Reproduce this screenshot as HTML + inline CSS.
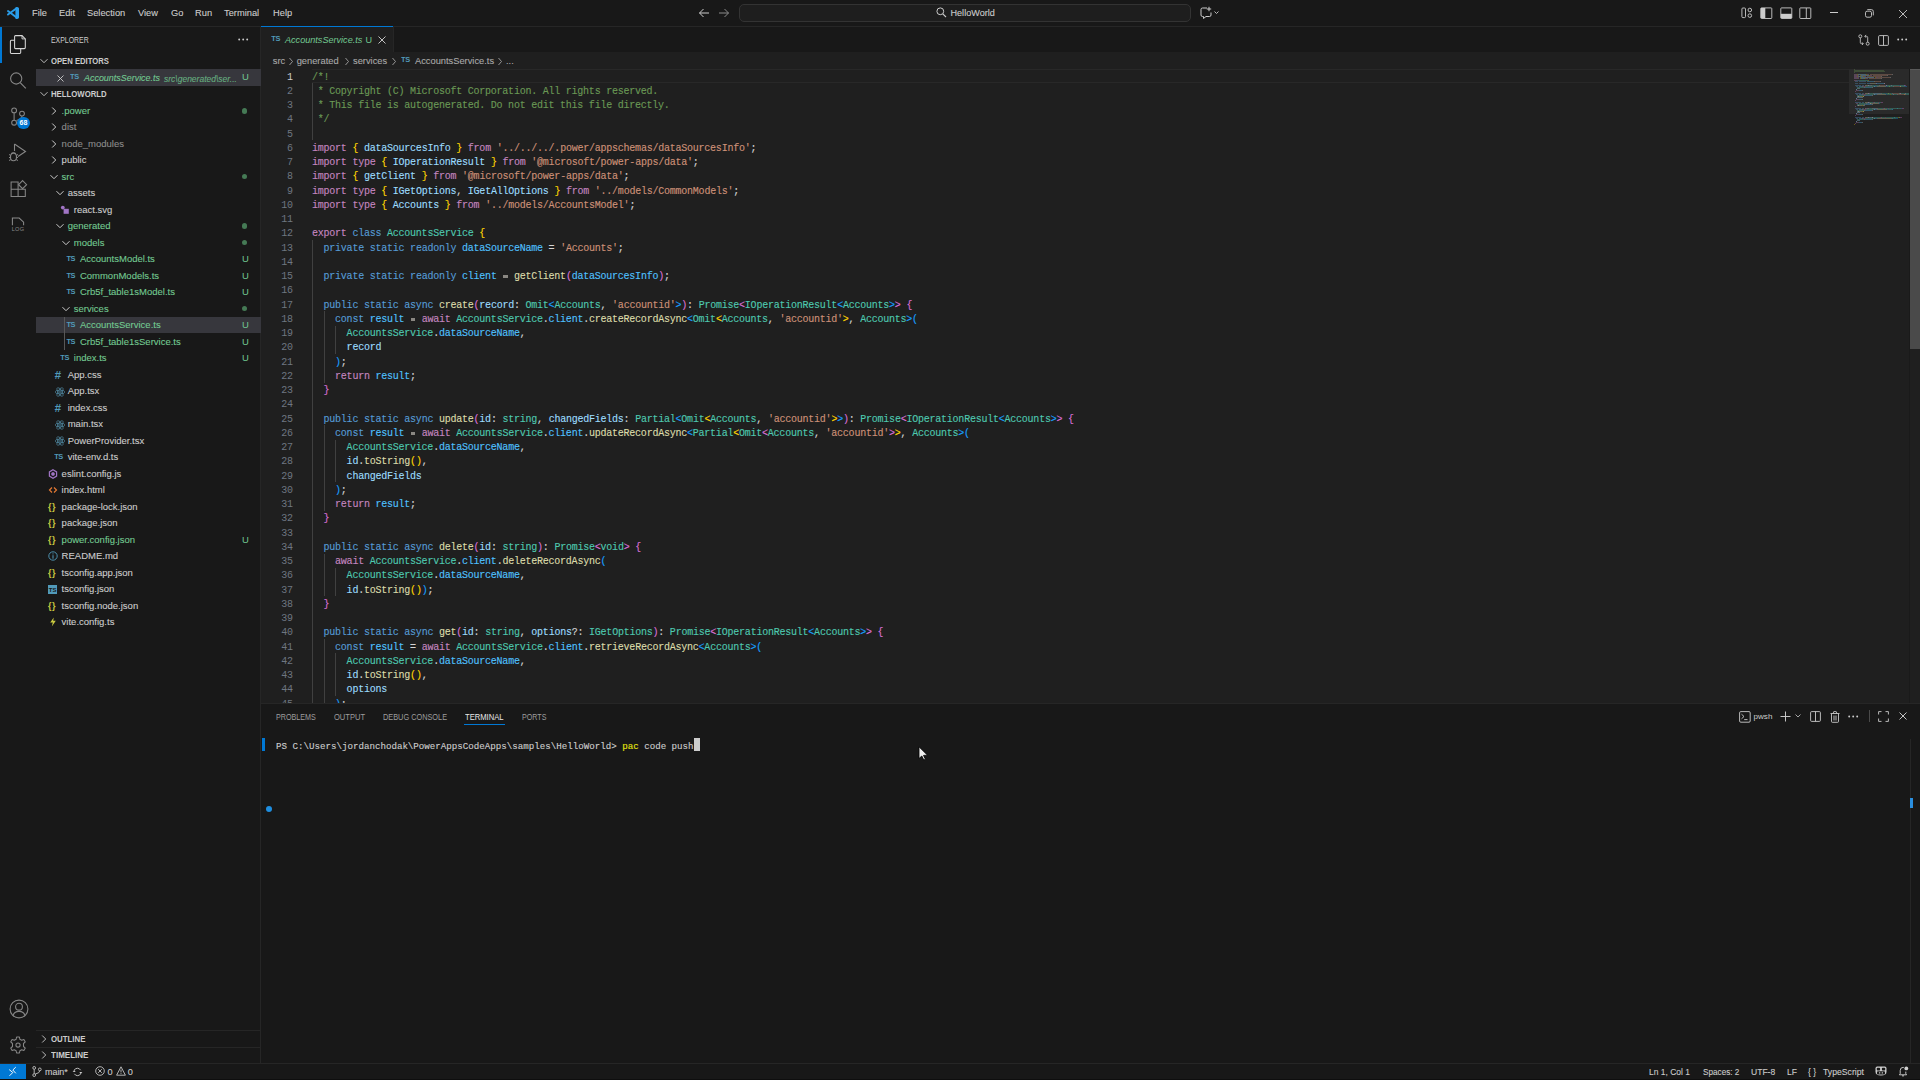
<!DOCTYPE html>
<html><head><meta charset="utf-8"><title>VS Code</title>
<style>
*{margin:0;padding:0;box-sizing:border-box}
html,body{width:1920px;height:1080px;overflow:hidden;background:#181818}
body{position:relative;font-family:"Liberation Sans",sans-serif;color:#cccccc}
.a{position:absolute}
.ic{position:absolute;overflow:visible}
/* title bar */
#title{position:absolute;left:0;top:0;width:1920px;height:26px;background:#181818}
.menu{-webkit-text-stroke:0.1px currentColor;position:absolute;top:7px;font-size:9.3px;line-height:12px;color:#cccccc;white-space:nowrap}
.hline{position:absolute;height:1px;background:#262626}
.vline{position:absolute;width:1px;background:#262626}
#cc{position:absolute;left:739px;top:4px;width:452px;height:17.6px;border:1px solid #333333;border-radius:5px;background:#1e1e1e}
/* activity bar */
#act{position:absolute;left:0;top:27px;width:36px;height:1036px;background:#181818}
/* sidebar */
#side{position:absolute;left:36px;top:27px;width:225px;height:1036px;background:#181818}
.tr{-webkit-text-stroke:0.1px currentColor;position:absolute;height:16.5px;line-height:16.5px;font-size:9.5px;white-space:nowrap}
.udeco{position:absolute;left:242px;height:16.5px;line-height:16.5px;font-size:9.5px;color:#73c991}
.gdot{position:absolute;left:241.8px;width:5.6px;height:5.6px;border-radius:50%;background:#457a55}
.selrow{position:absolute;left:36px;width:224.5px;height:16.5px;background:#37373d}
.tig{position:absolute;width:1px;background:#585858}
.tsic{position:absolute;font-size:7.4px;line-height:10px;font-weight:bold;color:#519aba;letter-spacing:-0.35px;transform:scaleY(0.95)}
.tsbox{position:absolute;width:9px;height:9px;background:#519aba;color:#181818;font-size:6px;line-height:10px;font-weight:bold;text-align:center;overflow:hidden}
.cssic{position:absolute;font-size:11.5px;line-height:12px;font-weight:bold;color:#519aba;font-style:italic}
.jsonic{position:absolute;font-size:9px;line-height:12px;font-weight:bold;color:#cbcb41;letter-spacing:0.5px}
.phdr{position:absolute;left:51px;font-size:8.3px;font-weight:bold;color:#cccccc;white-space:nowrap;line-height:16.5px;transform-origin:0 0}
/* editor */
#tabs{position:absolute;left:261px;top:27px;width:1659px;height:25px;background:#181818}
#editor{position:absolute;left:261px;top:52px;width:1659px;height:651px;background:#1f1f1f;overflow:hidden}
.cl{-webkit-text-stroke:0.12px currentColor;position:absolute;left:312px;height:14.25px;line-height:14.25px;font-family:"Liberation Mono",monospace;font-size:10px;letter-spacing:-0.233px;padding-top:1.7px;white-space:pre;color:#d4d4d4}
.ln{position:absolute;left:270px;width:22.7px;text-align:right;height:14.25px;line-height:14.25px;font-family:"Liberation Mono",monospace;font-size:10px;letter-spacing:-0.233px;padding-top:1.7px;color:#6e7681}
.ln.act{color:#cccccc}
.ig{position:absolute;width:1px;background:#404040}
#mm i{position:absolute;height:1px;opacity:0.32;display:block}
.bc{-webkit-text-stroke:0.1px currentColor;position:absolute;top:52.5px;height:16.5px;line-height:16.5px;font-size:9.3px;color:#a9a9a9;white-space:nowrap}
/* panel */
#panel{position:absolute;left:261px;top:703px;width:1659px;height:360px;background:#181818}
.ptab{position:absolute;top:709.5px;font-size:8.3px;line-height:14px;color:#9d9d9d;white-space:nowrap;transform-origin:0 0}
.term{-webkit-text-stroke:0.12px currentColor;position:absolute;font-family:"Liberation Mono",monospace;font-size:9.16px;line-height:13px;white-space:pre;color:#cccccc}
/* status */
#status{position:absolute;left:0;top:1063px;width:1920px;height:17px;background:#181818}
.st{-webkit-text-stroke:0.1px currentColor;position:absolute;top:1064.2px;height:16px;line-height:16px;font-size:9.2px;color:#cccccc;white-space:nowrap;transform-origin:0 0}
</style></head>
<body>
<!-- TITLE BAR -->
<div id="title"></div>
<svg class="ic" style="left:0;top:0" width="30" height="26" viewBox="0 0 30 26"><path d="M16.6 8.2 L8 14.6 M16.6 17.6 L8 11" fill="none" stroke="#2a9de9" stroke-width="1.9" stroke-linecap="round"/><path d="M15.4 7.6 Q16.2 6.8 17.2 7 L18.4 7.6 Q19 7.9 19 8.6 V17.4 Q19 18.1 18.4 18.4 L17.2 19 Q16.2 19.2 15.4 18.4 Z" fill="#2a9de9"/></svg>
<div class="menu" style="left:32px">File</div>
<div class="menu" style="left:59px">Edit</div>
<div class="menu" style="left:87px">Selection</div>
<div class="menu" style="left:138px">View</div>
<div class="menu" style="left:171px">Go</div>
<div class="menu" style="left:195px">Run</div>
<div class="menu" style="left:224px">Terminal</div>
<div class="menu" style="left:273px">Help</div>
<!-- nav arrows -->
<svg class="ic" style="left:698px;top:8px" width="12" height="10" viewBox="0 0 12 10"><path d="M11 5 H1.5 M5.5 1 L1.5 5 L5.5 9" fill="none" stroke="#cccccc" stroke-width="1"/></svg>
<svg class="ic" style="left:718px;top:8px" width="12" height="10" viewBox="0 0 12 10"><path d="M1 5 H10.5 M6.5 1 L10.5 5 L6.5 9" fill="none" stroke="#8a8a8a" stroke-width="1"/></svg>
<div id="cc"></div>
<svg class="ic" style="left:936px;top:7px" width="11" height="11" viewBox="0 0 11 11"><circle cx="4.3" cy="4.3" r="3.4" fill="none" stroke="#cccccc" stroke-width="1"/><path d="M6.8 6.8 L10 10" stroke="#cccccc" stroke-width="1.1"/></svg>
<div class="menu" style="left:950.5px;top:6.5px;font-size:9.1px">HelloWorld</div>
<!-- copilot chat icon -->
<svg class="ic" style="left:1200px;top:6px" width="22" height="14" viewBox="0 0 22 14"><path d="M1 3.5 Q1 2 2.5 2 H7 M1 3.5 V9 Q1 10.5 2.5 10.5 H3.5 V12.5 L6 10.5 H9.5 Q11 10.5 11 9 V6.5" fill="none" stroke="#cccccc" stroke-width="1"/><path d="M9 0.8 V5.2 M6.8 3 H11.2" stroke="#cccccc" stroke-width="1"/><path d="M14.5 5.5 L16.5 7.5 L18.5 5.5" fill="none" stroke="#cccccc" stroke-width="0.9"/></svg>
<!-- layout icons -->
<svg class="ic" style="left:1741px;top:7px" width="12" height="12" viewBox="0 0 12 12"><rect x="0.9" y="1" width="3.6" height="9.6" rx="1" fill="none" stroke="#cccccc" stroke-width="0.9"/><circle cx="8.8" cy="3" r="1.8" fill="none" stroke="#cccccc" stroke-width="0.9"/><circle cx="8.8" cy="8.6" r="1.8" fill="none" stroke="#cccccc" stroke-width="0.9"/></svg>
<svg class="ic" style="left:1760px;top:7px" width="13" height="12" viewBox="0 0 13 12"><rect x="0.8" y="0.9" width="11" height="10.6" rx="0.7" fill="none" stroke="#cccccc" stroke-width="0.9"/><rect x="0.8" y="1" width="4.5" height="10" fill="#cccccc"/></svg>
<svg class="ic" style="left:1779.5px;top:7px" width="13" height="12" viewBox="0 0 13 12"><rect x="0.8" y="0.9" width="11" height="10.6" rx="0.7" fill="none" stroke="#cccccc" stroke-width="0.9"/><rect x="0.8" y="6.8" width="11" height="4.2" fill="#cccccc"/></svg>
<svg class="ic" style="left:1799px;top:7px" width="13" height="12" viewBox="0 0 13 12"><rect x="0.8" y="0.9" width="11" height="10.6" rx="0.7" fill="none" stroke="#cccccc" stroke-width="0.9"/><path d="M7.3 1 V11" stroke="#cccccc" stroke-width="0.9"/></svg>
<div class="a" style="left:1830px;top:12px;width:8px;height:1px;background:#cccccc"></div>
<svg class="ic" style="left:1864.5px;top:8.8px" width="9" height="9" viewBox="0 0 9 9"><rect x="0.5" y="2.2" width="6" height="6" rx="1.6" fill="none" stroke="#cccccc" stroke-width="0.9"/><path d="M2.3 0.6 H6.4 Q8.3 0.6 8.3 2.5 V6.4" fill="none" stroke="#cccccc" stroke-width="0.9"/></svg>
<svg class="ic" style="left:1898px;top:8.5px" width="10" height="10" viewBox="0 0 10 10"><path d="M1 1 L9 9 M9 1 L1 9" stroke="#cccccc" stroke-width="0.9"/></svg>
<div class="hline" style="left:0;top:26px;width:1920px"></div>

<!-- ACTIVITY BAR -->
<div id="act"></div>
<div class="vline" style="left:35.5px;top:27px;height:1036px"></div>
<div class="a" style="left:0;top:27px;width:2px;height:35.5px;background:#0078d4"></div>
<!-- explorer icon -->
<svg class="ic" style="left:0;top:26px" width="36" height="36" viewBox="0 0 36 36"><path d="M15.5 9.6 H22 L25.3 12.9 V21.6 Q25.3 22.6 24.3 22.6 H15.5 Q14.6 22.6 14.6 21.6 V10.6 Q14.6 9.6 15.5 9.6 Z" fill="none" stroke="#d7d7d7" stroke-width="1.05"/><path d="M22 9.6 V12.9 H25.3" fill="none" stroke="#d7d7d7" stroke-width="0.9"/><path d="M14.6 14.2 H11.3 Q10.4 14.2 10.4 15.2 V26.5 Q10.4 27.4 11.3 27.4 H19.8 Q20.7 27.4 20.7 26.5 V22.6" fill="none" stroke="#d7d7d7" stroke-width="1.05"/></svg>
<!-- search -->
<svg class="ic" style="left:9px;top:71px" width="18" height="19" viewBox="0 0 18 19"><circle cx="7.2" cy="7.5" r="5.6" fill="none" stroke="#868686" stroke-width="1.1"/><path d="M11.2 11.6 L16.8 17.4" stroke="#868686" stroke-width="1.2"/></svg>
<!-- source control -->
<svg class="ic" style="left:10px;top:106px" width="16" height="20" viewBox="0 0 16 20"><circle cx="4.1" cy="4.4" r="2.4" fill="none" stroke="#868686" stroke-width="1.05"/><circle cx="4.1" cy="16.7" r="2.4" fill="none" stroke="#868686" stroke-width="1.05"/><circle cx="12" cy="7.6" r="2.4" fill="none" stroke="#868686" stroke-width="1.05"/><path d="M4.1 6.8 V14.3 M12 10 Q12 12.8 6.5 14.6" fill="none" stroke="#868686" stroke-width="1.05"/></svg>
<div class="a" style="left:17.1px;top:116.6px;width:12.8px;height:12.8px;border-radius:50%;background:#0078d4;color:#fff;font-size:7px;font-weight:bold;line-height:12.8px;text-align:center">68</div>
<!-- run debug -->
<svg class="ic" style="left:8px;top:142px" width="20" height="21" viewBox="0 0 20 21"><path d="M6.5 2 L17.5 9.5 L10 14.5" fill="none" stroke="#868686" stroke-width="1.1"/><path d="M6.5 2 V9" fill="none" stroke="#868686" stroke-width="1.1"/><ellipse cx="5.5" cy="15" rx="3" ry="3.8" fill="none" stroke="#868686" stroke-width="1.1"/><path d="M1 12.5 L2.8 13.4 M1 15.5 H2.5 M1 18.5 L2.8 17.6 M10 12.5 L8.2 13.4 M10 15.5 H8.5 M10 18.5 L8.2 17.6 M3 11.5 Q5.5 9.5 8 11.5" fill="none" stroke="#868686" stroke-width="1"/></svg>
<!-- extensions -->
<svg class="ic" style="left:10px;top:180px" width="18" height="18" viewBox="0 0 18 18"><path d="M1.1 2 H8.1 V16.4 H1.1 Z M1.1 9.2 H15.3 V16.4 H8.1" fill="none" stroke="#868686" stroke-width="1.05"/><path d="M12.6 0.6 L16.6 4.7 L12.6 8.7 L8.6 4.7 Z" fill="none" stroke="#868686" stroke-width="1.05"/></svg>
<!-- LOG -->
<svg class="ic" style="left:11px;top:216.5px" width="15" height="16" viewBox="0 0 15 16"><path d="M1.4 8.2 V1 H8.2 L12.6 5.2 V8.2" fill="none" stroke="#8a8a8a" stroke-width="1.05"/><text x="7" y="14.4" font-family="Liberation Sans" font-size="5.6" fill="#8a8a8a" text-anchor="middle" letter-spacing="0.2">LOG</text></svg>
<!-- account -->
<svg class="ic" style="left:8.5px;top:999px" width="20" height="20" viewBox="0 0 20 20"><circle cx="10" cy="10" r="8.9" fill="none" stroke="#868686" stroke-width="1.1"/><circle cx="10" cy="7.7" r="3.4" fill="none" stroke="#868686" stroke-width="1.1"/><path d="M4.2 16.6 Q5 12.4 10 12.4 Q15 12.4 15.8 16.6" fill="none" stroke="#868686" stroke-width="1.1"/></svg>
<!-- settings -->
<svg class="ic" style="left:9px;top:1036px" width="18" height="18" viewBox="0 0 18 18"><path d="M7.6 1 H10.4 L10.9 3.3 L12.7 4.3 L14.9 3.5 L16.3 5.9 L14.5 7.5 V10.5 L16.3 12.1 L14.9 14.5 L12.7 13.7 L10.9 14.7 L10.4 17 H7.6 L7.1 14.7 L5.3 13.7 L3.1 14.5 L1.7 12.1 L3.5 10.5 V7.5 L1.7 5.9 L3.1 3.5 L5.3 4.3 L7.1 3.3 Z" fill="none" stroke="#868686" stroke-width="1.05" stroke-linejoin="round"/><circle cx="9" cy="9" r="2.1" fill="none" stroke="#868686" stroke-width="1.05"/></svg>

<!-- SIDEBAR -->
<div id="side"></div>
<div class="vline" style="left:260.2px;top:27px;height:1036px"></div>
<div class="a" style="left:51px;top:33.3px;font-size:8.3px;line-height:14px;color:#cccccc;white-space:nowrap;transform-origin:0 0;transform:scaleX(0.834)">EXPLORER</div>
<svg class="ic" style="left:237.5px;top:38px" width="11" height="3" viewBox="0 0 11 3"><circle cx="1.2" cy="1.5" r="0.95" fill="#cccccc"/><circle cx="5.2" cy="1.5" r="0.95" fill="#cccccc"/><circle cx="9.2" cy="1.5" r="0.95" fill="#cccccc"/></svg>
<svg class="ic" style="left:38.5px;top:56px" width="10" height="10" viewBox="0 0 10 10"><path d="M1.5 3.2 L5 6.7 L8.5 3.2" fill="none" stroke="#cccccc" stroke-width="0.9"/></svg>
<div class="phdr" style="top:53px;transform:scaleX(0.927)">OPEN EDITORS</div>
<div class="a" style="left:36px;top:69px;width:224.5px;height:16.5px;background:#37373d"></div>
<svg class="ic" style="left:57px;top:74.5px" width="7" height="7" viewBox="0 0 7 7"><path d="M0.5 0.5 L6.5 6.5 M6.5 0.5 L0.5 6.5" stroke="#cccccc" stroke-width="0.9"/></svg>
<div class="tsic" style="left:70px;top:72.2px">TS</div>
<div class="tr" style="left:84px;top:69.8px;color:#73c991;font-style:italic;font-size:8.95px">AccountsService.ts</div>
<div class="tr" style="left:164px;top:70.5px;color:#73c991;font-style:italic;font-size:8.5px;opacity:0.8">src\generated\ser...</div>
<div class="udeco" style="top:69px">U</div>
<svg class="ic" style="left:38.5px;top:89px" width="10" height="10" viewBox="0 0 10 10"><path d="M1.5 3.2 L5 6.7 L8.5 3.2" fill="none" stroke="#cccccc" stroke-width="0.9"/></svg>
<div class="phdr" style="top:86px;transform:scaleX(0.937)">HELLOWORLD</div>
<svg class="ic" style="left:49.3px;top:105.8px" width="10" height="10" viewBox="0 0 10 10"><path d="M3.2 1.5 L6.7 5 L3.2 8.5" fill="none" stroke="#cccccc" stroke-width="1.0"/></svg>
<div class="tr" style="left:61.6px;top:102.5px;color:#73c991">.power</div>
<div class="gdot" style="top:108.0px"></div>
<svg class="ic" style="left:49.3px;top:122.2px" width="10" height="10" viewBox="0 0 10 10"><path d="M3.2 1.5 L6.7 5 L3.2 8.5" fill="none" stroke="#cccccc" stroke-width="1.0"/></svg>
<div class="tr" style="left:61.6px;top:119.0px;color:#8c8c8c">dist</div>
<svg class="ic" style="left:49.3px;top:138.8px" width="10" height="10" viewBox="0 0 10 10"><path d="M3.2 1.5 L6.7 5 L3.2 8.5" fill="none" stroke="#cccccc" stroke-width="1.0"/></svg>
<div class="tr" style="left:61.6px;top:135.5px;color:#8c8c8c">node_modules</div>
<svg class="ic" style="left:49.3px;top:155.2px" width="10" height="10" viewBox="0 0 10 10"><path d="M3.2 1.5 L6.7 5 L3.2 8.5" fill="none" stroke="#cccccc" stroke-width="1.0"/></svg>
<div class="tr" style="left:61.6px;top:152.0px;color:#cccccc">public</div>
<svg class="ic" style="left:48.6px;top:171.6px" width="10" height="10" viewBox="0 0 10 10"><path d="M1.5 3.2 L5 6.7 L8.5 3.2" fill="none" stroke="#cccccc" stroke-width="1.0"/></svg>
<div class="tr" style="left:61.6px;top:168.5px;color:#73c991">src</div>
<div class="gdot" style="top:173.9px"></div>
<svg class="ic" style="left:54.7px;top:188.1px" width="10" height="10" viewBox="0 0 10 10"><path d="M1.5 3.2 L5 6.7 L8.5 3.2" fill="none" stroke="#cccccc" stroke-width="1.0"/></svg>
<div class="tr" style="left:67.7px;top:185.0px;color:#cccccc">assets</div>
<svg class="ic" style="left:60.3px;top:204.8px" width="10" height="10" viewBox="0 0 10 10"><circle cx="2.8" cy="2.6" r="1.9" fill="#a074c4"/><rect x="3.6" y="3.8" width="5.2" height="5" fill="#a074c4"/></svg>
<div class="tr" style="left:73.8px;top:201.5px;color:#cccccc">react.svg</div>
<svg class="ic" style="left:54.7px;top:221.1px" width="10" height="10" viewBox="0 0 10 10"><path d="M1.5 3.2 L5 6.7 L8.5 3.2" fill="none" stroke="#cccccc" stroke-width="1.0"/></svg>
<div class="tr" style="left:67.7px;top:218.0px;color:#73c991">generated</div>
<div class="gdot" style="top:223.4px"></div>
<svg class="ic" style="left:60.8px;top:237.6px" width="10" height="10" viewBox="0 0 10 10"><path d="M1.5 3.2 L5 6.7 L8.5 3.2" fill="none" stroke="#cccccc" stroke-width="1.0"/></svg>
<div class="tr" style="left:73.8px;top:234.5px;color:#73c991">models</div>
<div class="gdot" style="top:239.9px"></div>
<div class="tsic" style="left:66.4px;top:254.2px">TS</div>
<div class="tr" style="left:79.9px;top:251.0px;color:#73c991">AccountsModel.ts</div>
<div class="udeco" style="top:251.0px">U</div>
<div class="tsic" style="left:66.4px;top:270.8px">TS</div>
<div class="tr" style="left:79.9px;top:267.5px;color:#73c991">CommonModels.ts</div>
<div class="udeco" style="top:267.5px">U</div>
<div class="tsic" style="left:66.4px;top:287.2px">TS</div>
<div class="tr" style="left:79.9px;top:284.0px;color:#73c991">Crb5f_table1sModel.ts</div>
<div class="udeco" style="top:284.0px">U</div>
<svg class="ic" style="left:60.8px;top:303.6px" width="10" height="10" viewBox="0 0 10 10"><path d="M1.5 3.2 L5 6.7 L8.5 3.2" fill="none" stroke="#cccccc" stroke-width="1.0"/></svg>
<div class="tr" style="left:73.8px;top:300.5px;color:#73c991">services</div>
<div class="gdot" style="top:305.9px"></div>
<div class="selrow" style="top:316.5px"></div>
<div class="tsic" style="left:66.4px;top:320.2px">TS</div>
<div class="tr" style="left:79.9px;top:317.0px;color:#73c991">AccountsService.ts</div>
<div class="udeco" style="top:317.0px">U</div>
<div class="tsic" style="left:66.4px;top:336.8px">TS</div>
<div class="tr" style="left:79.9px;top:333.5px;color:#73c991">Crb5f_table1sService.ts</div>
<div class="udeco" style="top:333.5px">U</div>
<div class="tsic" style="left:60.3px;top:353.2px">TS</div>
<div class="tr" style="left:73.8px;top:350.0px;color:#73c991">index.ts</div>
<div class="udeco" style="top:350.0px">U</div>
<div class="cssic" style="left:54.5px;top:368.6px">#</div>
<div class="tr" style="left:67.7px;top:366.5px;color:#cccccc">App.css</div>
<svg class="ic" style="left:53.7px;top:385.8px" width="12" height="12" viewBox="0 0 12 12"><g fill="none" stroke="#5fa8c8" stroke-width="0.5"><ellipse cx="6" cy="6" rx="4.9" ry="1.9"/><ellipse cx="6" cy="6" rx="4.9" ry="1.9" transform="rotate(60 6 6)"/><ellipse cx="6" cy="6" rx="4.9" ry="1.9" transform="rotate(120 6 6)"/></g><circle cx="6" cy="6" r="0.8" fill="#519aba"/></svg>
<div class="tr" style="left:67.7px;top:383.0px;color:#cccccc">App.tsx</div>
<div class="cssic" style="left:54.5px;top:401.6px">#</div>
<div class="tr" style="left:67.7px;top:399.5px;color:#cccccc">index.css</div>
<svg class="ic" style="left:53.7px;top:418.8px" width="12" height="12" viewBox="0 0 12 12"><g fill="none" stroke="#5fa8c8" stroke-width="0.5"><ellipse cx="6" cy="6" rx="4.9" ry="1.9"/><ellipse cx="6" cy="6" rx="4.9" ry="1.9" transform="rotate(60 6 6)"/><ellipse cx="6" cy="6" rx="4.9" ry="1.9" transform="rotate(120 6 6)"/></g><circle cx="6" cy="6" r="0.8" fill="#519aba"/></svg>
<div class="tr" style="left:67.7px;top:416.0px;color:#cccccc">main.tsx</div>
<svg class="ic" style="left:53.7px;top:435.2px" width="12" height="12" viewBox="0 0 12 12"><g fill="none" stroke="#5fa8c8" stroke-width="0.5"><ellipse cx="6" cy="6" rx="4.9" ry="1.9"/><ellipse cx="6" cy="6" rx="4.9" ry="1.9" transform="rotate(60 6 6)"/><ellipse cx="6" cy="6" rx="4.9" ry="1.9" transform="rotate(120 6 6)"/></g><circle cx="6" cy="6" r="0.8" fill="#519aba"/></svg>
<div class="tr" style="left:67.7px;top:432.5px;color:#cccccc">PowerProvider.tsx</div>
<div class="tsic" style="left:54.2px;top:452.2px">TS</div>
<div class="tr" style="left:67.7px;top:449.0px;color:#cccccc">vite-env.d.ts</div>
<svg class="ic" style="left:48.1px;top:468.8px" width="10" height="10" viewBox="0 0 10 10"><path d="M5 0.8 L8.6 2.9 L8.6 7.1 L5 9.2 L1.4 7.1 L1.4 2.9 Z" fill="none" stroke="#a074c4" stroke-width="1.2"/><path d="M5 3 L6.7 4 L6.7 6 L5 7 L3.3 6 L3.3 4 Z" fill="#a074c4"/></svg>
<div class="tr" style="left:61.6px;top:465.5px;color:#cccccc">eslint.config.js</div>
<svg class="ic" style="left:48.1px;top:485.2px" width="10" height="10" viewBox="0 0 10 10"><path d="M4 2.5 L1.5 5 L4 7.5 M6 2.5 L8.5 5 L6 7.5" fill="none" stroke="#e37933" stroke-width="1.2"/></svg>
<div class="tr" style="left:61.6px;top:482.0px;color:#cccccc">index.html</div>
<div class="jsonic" style="left:48.1px;top:500.8px">{}</div>
<div class="tr" style="left:61.6px;top:498.5px;color:#cccccc">package-lock.json</div>
<div class="jsonic" style="left:48.1px;top:517.2px">{}</div>
<div class="tr" style="left:61.6px;top:515.0px;color:#cccccc">package.json</div>
<div class="jsonic" style="left:48.1px;top:533.8px">{}</div>
<div class="tr" style="left:61.6px;top:531.5px;color:#73c991">power.config.json</div>
<div class="udeco" style="top:531.5px">U</div>
<svg class="ic" style="left:48.1px;top:551.2px" width="10" height="10" viewBox="0 0 10 10"><circle cx="5" cy="5" r="4.2" fill="none" stroke="#519aba" stroke-width="0.9"/><rect x="4.5" y="4.2" width="1" height="3.5" fill="#519aba"/><rect x="4.5" y="2.4" width="1" height="1" fill="#519aba"/></svg>
<div class="tr" style="left:61.6px;top:548.0px;color:#cccccc">README.md</div>
<div class="jsonic" style="left:48.1px;top:566.8px">{}</div>
<div class="tr" style="left:61.6px;top:564.5px;color:#cccccc">tsconfig.app.json</div>
<div class="tsbox" style="left:48.1px;top:584.8px">TS</div>
<div class="tr" style="left:61.6px;top:581.0px;color:#cccccc">tsconfig.json</div>
<div class="jsonic" style="left:48.1px;top:599.8px">{}</div>
<div class="tr" style="left:61.6px;top:597.5px;color:#cccccc">tsconfig.node.json</div>
<svg class="ic" style="left:48.1px;top:617.2px" width="10" height="10" viewBox="0 0 10 10"><path d="M5.8 0.5 L2.2 5.6 L4.8 5.6 L3.8 9.5 L7.8 3.8 L5.2 3.8 Z" fill="#cbcb41"/></svg>
<div class="tr" style="left:61.6px;top:614.0px;color:#cccccc">vite.config.ts</div>
<div class="tig" style="left:63.6px;top:316.5px;height:33px"></div>
<div class="hline" style="left:36px;top:1030px;width:224.5px"></div>
<svg class="ic" style="left:38.5px;top:1033.5px" width="10" height="10" viewBox="0 0 10 10"><path d="M3.2 1.5 L6.7 5 L3.2 8.5" fill="none" stroke="#cccccc" stroke-width="0.9"/></svg>
<div class="phdr" style="top:1030.5px;transform:scaleX(0.945)">OUTLINE</div>
<div class="hline" style="left:36px;top:1046.5px;width:224.5px"></div>
<svg class="ic" style="left:38.5px;top:1050px" width="10" height="10" viewBox="0 0 10 10"><path d="M3.2 1.5 L6.7 5 L3.2 8.5" fill="none" stroke="#cccccc" stroke-width="0.9"/></svg>
<div class="phdr" style="top:1047px;transform:scaleX(0.968)">TIMELINE</div>

<!-- TABS -->
<div id="tabs"></div>
<div class="a" style="left:261px;top:26.5px;width:131.5px;height:26px;background:#1f1f1f"></div>
<div class="a" style="left:261px;top:26.3px;width:131.5px;height:1px;background:#0078d4"></div>
<div class="vline" style="left:392.5px;top:27px;height:25px"></div>
<div class="hline" style="left:393px;top:51.5px;width:1527px"></div>
<div class="tsic" style="left:271.3px;top:34.4px">TS</div>
<div class="a" style="left:285px;top:32.8px;font-size:9.1px;line-height:14px;color:#73c991;font-style:italic;white-space:nowrap">AccountsService.ts</div>
<div class="a" style="left:365.5px;top:32.8px;font-size:9.1px;line-height:14px;color:#73c991;white-space:nowrap">U</div>
<svg class="ic" style="left:378px;top:35.5px" width="8" height="8" viewBox="0 0 8 8"><path d="M0.5 0.5 L7.5 7.5 M7.5 0.5 L0.5 7.5" stroke="#cccccc" stroke-width="0.95"/></svg>
<!-- editor actions -->
<svg class="ic" style="left:1857.5px;top:34px" width="12" height="12" viewBox="0 0 12 12"><circle cx="2.3" cy="2.3" r="1.5" fill="none" stroke="#cccccc" stroke-width="0.85"/><circle cx="9.7" cy="9.7" r="1.5" fill="none" stroke="#cccccc" stroke-width="0.85"/><path d="M2.3 3.8 V8.5 Q2.3 9.7 3.5 9.7 H5 M4 8.3 L5.3 9.7 L4 11 M9.7 8.2 V3.5 Q9.7 2.3 8.5 2.3 H7 M8 0.9 L6.7 2.3 L8 3.7" fill="none" stroke="#cccccc" stroke-width="0.85"/></svg>
<svg class="ic" style="left:1878px;top:34.5px" width="11" height="11" viewBox="0 0 11 11"><rect x="0.6" y="0.6" width="9.8" height="9.8" rx="1" fill="none" stroke="#cccccc" stroke-width="0.9"/><path d="M5.5 0.6 V10.4" stroke="#cccccc" stroke-width="0.9"/></svg>
<svg class="ic" style="left:1897px;top:38px" width="11" height="3" viewBox="0 0 11 3"><circle cx="1.2" cy="1.5" r="0.95" fill="#cccccc"/><circle cx="5.2" cy="1.5" r="0.95" fill="#cccccc"/><circle cx="9.2" cy="1.5" r="0.95" fill="#cccccc"/></svg>

<!-- EDITOR -->
<div id="editor"></div>
<div class="bc" style="left:272.8px">src</div>
<svg class="ic" style="left:287.5px;top:56.5px" width="6" height="9" viewBox="0 0 6 9"><path d="M1.5 1 L4.5 4.5 L1.5 8" fill="none" stroke="#a9a9a9" stroke-width="0.85"/></svg>
<div class="bc" style="left:296.7px">generated</div>
<svg class="ic" style="left:344px;top:56.5px" width="6" height="9" viewBox="0 0 6 9"><path d="M1.5 1 L4.5 4.5 L1.5 8" fill="none" stroke="#a9a9a9" stroke-width="0.85"/></svg>
<div class="bc" style="left:353px">services</div>
<svg class="ic" style="left:391px;top:56.5px" width="6" height="9" viewBox="0 0 6 9"><path d="M1.5 1 L4.5 4.5 L1.5 8" fill="none" stroke="#a9a9a9" stroke-width="0.85"/></svg>
<div class="tsic" style="left:401px;top:55.3px">TS</div>
<div class="bc" style="left:415px">AccountsService.ts</div>
<svg class="ic" style="left:497px;top:56.5px" width="6" height="9" viewBox="0 0 6 9"><path d="M1.5 1 L4.5 4.5 L1.5 8" fill="none" stroke="#a9a9a9" stroke-width="0.85"/></svg>
<div class="bc" style="left:506px">...</div>
<!-- line highlight -->
<div class="a" style="left:312px;top:69.2px;width:1537px;height:13.4px;border-top:1px solid #282828;border-bottom:1px solid #282828"></div>
<div class="ig" style="left:312.0px;top:83.25px;height:57.00px"></div>
<div class="ig" style="left:312.0px;top:240.00px;height:463.00px"></div>
<div class="ig" style="left:323.5px;top:311.25px;height:71.25px"></div>
<div class="ig" style="left:323.5px;top:425.25px;height:85.50px"></div>
<div class="ig" style="left:323.5px;top:553.50px;height:42.75px"></div>
<div class="ig" style="left:323.5px;top:639.00px;height:64.00px"></div>
<div class="ig" style="left:335.1px;top:325.50px;height:28.50px"></div>
<div class="ig" style="left:335.1px;top:439.50px;height:42.75px"></div>
<div class="ig" style="left:335.1px;top:567.75px;height:28.50px"></div>
<div class="ig" style="left:335.1px;top:653.25px;height:42.75px"></div>
<div class="cl" style="top:69.00px"><span style="color:#6A9955">/*!</span></div>
<div class="ln act" style="top:69.00px">1</div>
<div class="cl" style="top:83.25px"><span style="color:#6A9955"> * Copyright (C) Microsoft Corporation. All rights reserved.</span></div>
<div class="ln" style="top:83.25px">2</div>
<div class="cl" style="top:97.50px"><span style="color:#6A9955"> * This file is autogenerated. Do not edit this file directly.</span></div>
<div class="ln" style="top:97.50px">3</div>
<div class="cl" style="top:111.75px"><span style="color:#6A9955"> */</span></div>
<div class="ln" style="top:111.75px">4</div>
<div class="cl" style="top:126.00px"></div>
<div class="ln" style="top:126.00px">5</div>
<div class="cl" style="top:140.25px"><span style="color:#C586C0">import</span> <span style="color:#FFD700">{</span> <span style="color:#9CDCFE">dataSourcesInfo</span> <span style="color:#FFD700">}</span> <span style="color:#C586C0">from</span> <span style="color:#CE9178">&#x27;../../../.power/appschemas/dataSourcesInfo&#x27;</span><span style="color:#D4D4D4">;</span></div>
<div class="ln" style="top:140.25px">6</div>
<div class="cl" style="top:154.50px"><span style="color:#C586C0">import</span> <span style="color:#C586C0">type</span> <span style="color:#FFD700">{</span> <span style="color:#9CDCFE">IOperationResult</span> <span style="color:#FFD700">}</span> <span style="color:#C586C0">from</span> <span style="color:#CE9178">&#x27;@microsoft/power-apps/data&#x27;</span><span style="color:#D4D4D4">;</span></div>
<div class="ln" style="top:154.50px">7</div>
<div class="cl" style="top:168.75px"><span style="color:#C586C0">import</span> <span style="color:#FFD700">{</span> <span style="color:#9CDCFE">getClient</span> <span style="color:#FFD700">}</span> <span style="color:#C586C0">from</span> <span style="color:#CE9178">&#x27;@microsoft/power-apps/data&#x27;</span><span style="color:#D4D4D4">;</span></div>
<div class="ln" style="top:168.75px">8</div>
<div class="cl" style="top:183.00px"><span style="color:#C586C0">import</span> <span style="color:#C586C0">type</span> <span style="color:#FFD700">{</span> <span style="color:#9CDCFE">IGetOptions</span><span style="color:#D4D4D4">,</span> <span style="color:#9CDCFE">IGetAllOptions</span> <span style="color:#FFD700">}</span> <span style="color:#C586C0">from</span> <span style="color:#CE9178">&#x27;../models/CommonModels&#x27;</span><span style="color:#D4D4D4">;</span></div>
<div class="ln" style="top:183.00px">9</div>
<div class="cl" style="top:197.25px"><span style="color:#C586C0">import</span> <span style="color:#C586C0">type</span> <span style="color:#FFD700">{</span> <span style="color:#9CDCFE">Accounts</span> <span style="color:#FFD700">}</span> <span style="color:#C586C0">from</span> <span style="color:#CE9178">&#x27;../models/AccountsModel&#x27;</span><span style="color:#D4D4D4">;</span></div>
<div class="ln" style="top:197.25px">10</div>
<div class="cl" style="top:211.50px"></div>
<div class="ln" style="top:211.50px">11</div>
<div class="cl" style="top:225.75px"><span style="color:#C586C0">export</span> <span style="color:#569CD6">class</span> <span style="color:#4EC9B0">AccountsService</span> <span style="color:#FFD700">{</span></div>
<div class="ln" style="top:225.75px">12</div>
<div class="cl" style="top:240.00px">  <span style="color:#569CD6">private</span> <span style="color:#569CD6">static</span> <span style="color:#569CD6">readonly</span> <span style="color:#4FC1FF">dataSourceName</span> <span style="color:#D4D4D4">=</span> <span style="color:#CE9178">&#x27;Accounts&#x27;</span><span style="color:#D4D4D4">;</span></div>
<div class="ln" style="top:240.00px">13</div>
<div class="cl" style="top:254.25px"></div>
<div class="ln" style="top:254.25px">14</div>
<div class="a" style="left:502.91px;top:274.90px;width:4.6px;height:3.4px;background:#8a8782"></div>
<div class="cl" style="top:268.50px">  <span style="color:#569CD6">private</span> <span style="color:#569CD6">static</span> <span style="color:#569CD6">readonly</span> <span style="color:#4FC1FF">client</span>   <span style="color:#DCDCAA">getClient</span><span style="color:#DA70D6">(</span><span style="color:#4FC1FF">dataSourcesInfo</span><span style="color:#DA70D6">)</span><span style="color:#D4D4D4">;</span></div>
<div class="ln" style="top:268.50px">15</div>
<div class="cl" style="top:282.75px"></div>
<div class="ln" style="top:282.75px">16</div>
<div class="cl" style="top:297.00px">  <span style="color:#569CD6">public</span> <span style="color:#569CD6">static</span> <span style="color:#569CD6">async</span> <span style="color:#DCDCAA">create</span><span style="color:#DA70D6">(</span><span style="color:#9CDCFE">record</span><span style="color:#D4D4D4">:</span> <span style="color:#4EC9B0">Omit</span><span style="color:#179FFF">&lt;</span><span style="color:#4EC9B0">Accounts</span><span style="color:#D4D4D4">,</span> <span style="color:#CE9178">&#x27;accountid&#x27;</span><span style="color:#179FFF">&gt;</span><span style="color:#DA70D6">)</span><span style="color:#D4D4D4">:</span> <span style="color:#4EC9B0">Promise</span><span style="color:#DA70D6">&lt;</span><span style="color:#4EC9B0">IOperationResult</span><span style="color:#179FFF">&lt;</span><span style="color:#4EC9B0">Accounts</span><span style="color:#179FFF">&gt;</span><span style="color:#DA70D6">&gt;</span> <span style="color:#DA70D6">{</span></div>
<div class="ln" style="top:297.00px">17</div>
<div class="a" style="left:410.64px;top:317.65px;width:4.6px;height:3.4px;background:#8a8782"></div>
<div class="cl" style="top:311.25px">    <span style="color:#569CD6">const</span> <span style="color:#4FC1FF">result</span>   <span style="color:#C586C0">await</span> <span style="color:#4EC9B0">AccountsService</span><span style="color:#D4D4D4">.</span><span style="color:#4FC1FF">client</span><span style="color:#D4D4D4">.</span><span style="color:#DCDCAA">createRecordAsync</span><span style="color:#179FFF">&lt;</span><span style="color:#4EC9B0">Omit</span><span style="color:#FFD700">&lt;</span><span style="color:#4EC9B0">Accounts</span><span style="color:#D4D4D4">,</span> <span style="color:#CE9178">&#x27;accountid&#x27;</span><span style="color:#FFD700">&gt;</span><span style="color:#D4D4D4">,</span> <span style="color:#4EC9B0">Accounts</span><span style="color:#179FFF">&gt;</span><span style="color:#179FFF">(</span></div>
<div class="ln" style="top:311.25px">18</div>
<div class="cl" style="top:325.50px">      <span style="color:#4EC9B0">AccountsService</span><span style="color:#D4D4D4">.</span><span style="color:#4FC1FF">dataSourceName</span><span style="color:#D4D4D4">,</span></div>
<div class="ln" style="top:325.50px">19</div>
<div class="cl" style="top:339.75px">      <span style="color:#9CDCFE">record</span></div>
<div class="ln" style="top:339.75px">20</div>
<div class="cl" style="top:354.00px">    <span style="color:#179FFF">)</span><span style="color:#D4D4D4">;</span></div>
<div class="ln" style="top:354.00px">21</div>
<div class="cl" style="top:368.25px">    <span style="color:#C586C0">return</span> <span style="color:#4FC1FF">result</span><span style="color:#D4D4D4">;</span></div>
<div class="ln" style="top:368.25px">22</div>
<div class="cl" style="top:382.50px">  <span style="color:#DA70D6">}</span></div>
<div class="ln" style="top:382.50px">23</div>
<div class="cl" style="top:396.75px"></div>
<div class="ln" style="top:396.75px">24</div>
<div class="cl" style="top:411.00px">  <span style="color:#569CD6">public</span> <span style="color:#569CD6">static</span> <span style="color:#569CD6">async</span> <span style="color:#DCDCAA">update</span><span style="color:#DA70D6">(</span><span style="color:#9CDCFE">id</span><span style="color:#D4D4D4">:</span> <span style="color:#4EC9B0">string</span><span style="color:#D4D4D4">,</span> <span style="color:#9CDCFE">changedFields</span><span style="color:#D4D4D4">:</span> <span style="color:#4EC9B0">Partial</span><span style="color:#179FFF">&lt;</span><span style="color:#4EC9B0">Omit</span><span style="color:#FFD700">&lt;</span><span style="color:#4EC9B0">Accounts</span><span style="color:#D4D4D4">,</span> <span style="color:#CE9178">&#x27;accountid&#x27;</span><span style="color:#FFD700">&gt;</span><span style="color:#179FFF">&gt;</span><span style="color:#DA70D6">)</span><span style="color:#D4D4D4">:</span> <span style="color:#4EC9B0">Promise</span><span style="color:#DA70D6">&lt;</span><span style="color:#4EC9B0">IOperationResult</span><span style="color:#179FFF">&lt;</span><span style="color:#4EC9B0">Accounts</span><span style="color:#179FFF">&gt;</span><span style="color:#DA70D6">&gt;</span> <span style="color:#DA70D6">{</span></div>
<div class="ln" style="top:411.00px">25</div>
<div class="a" style="left:410.64px;top:431.65px;width:4.6px;height:3.4px;background:#8a8782"></div>
<div class="cl" style="top:425.25px">    <span style="color:#569CD6">const</span> <span style="color:#4FC1FF">result</span>   <span style="color:#C586C0">await</span> <span style="color:#4EC9B0">AccountsService</span><span style="color:#D4D4D4">.</span><span style="color:#4FC1FF">client</span><span style="color:#D4D4D4">.</span><span style="color:#DCDCAA">updateRecordAsync</span><span style="color:#179FFF">&lt;</span><span style="color:#4EC9B0">Partial</span><span style="color:#FFD700">&lt;</span><span style="color:#4EC9B0">Omit</span><span style="color:#DA70D6">&lt;</span><span style="color:#4EC9B0">Accounts</span><span style="color:#D4D4D4">,</span> <span style="color:#CE9178">&#x27;accountid&#x27;</span><span style="color:#DA70D6">&gt;</span><span style="color:#FFD700">&gt;</span><span style="color:#D4D4D4">,</span> <span style="color:#4EC9B0">Accounts</span><span style="color:#179FFF">&gt;</span><span style="color:#179FFF">(</span></div>
<div class="ln" style="top:425.25px">26</div>
<div class="cl" style="top:439.50px">      <span style="color:#4EC9B0">AccountsService</span><span style="color:#D4D4D4">.</span><span style="color:#4FC1FF">dataSourceName</span><span style="color:#D4D4D4">,</span></div>
<div class="ln" style="top:439.50px">27</div>
<div class="cl" style="top:453.75px">      <span style="color:#9CDCFE">id</span><span style="color:#D4D4D4">.</span><span style="color:#DCDCAA">toString</span><span style="color:#FFD700">(</span><span style="color:#FFD700">)</span><span style="color:#D4D4D4">,</span></div>
<div class="ln" style="top:453.75px">28</div>
<div class="cl" style="top:468.00px">      <span style="color:#9CDCFE">changedFields</span></div>
<div class="ln" style="top:468.00px">29</div>
<div class="cl" style="top:482.25px">    <span style="color:#179FFF">)</span><span style="color:#D4D4D4">;</span></div>
<div class="ln" style="top:482.25px">30</div>
<div class="cl" style="top:496.50px">    <span style="color:#C586C0">return</span> <span style="color:#4FC1FF">result</span><span style="color:#D4D4D4">;</span></div>
<div class="ln" style="top:496.50px">31</div>
<div class="cl" style="top:510.75px">  <span style="color:#DA70D6">}</span></div>
<div class="ln" style="top:510.75px">32</div>
<div class="cl" style="top:525.00px"></div>
<div class="ln" style="top:525.00px">33</div>
<div class="cl" style="top:539.25px">  <span style="color:#569CD6">public</span> <span style="color:#569CD6">static</span> <span style="color:#569CD6">async</span> <span style="color:#DCDCAA">delete</span><span style="color:#DA70D6">(</span><span style="color:#9CDCFE">id</span><span style="color:#D4D4D4">:</span> <span style="color:#4EC9B0">string</span><span style="color:#DA70D6">)</span><span style="color:#D4D4D4">:</span> <span style="color:#4EC9B0">Promise</span><span style="color:#DA70D6">&lt;</span><span style="color:#4EC9B0">void</span><span style="color:#DA70D6">&gt;</span> <span style="color:#DA70D6">{</span></div>
<div class="ln" style="top:539.25px">34</div>
<div class="cl" style="top:553.50px">    <span style="color:#C586C0">await</span> <span style="color:#4EC9B0">AccountsService</span><span style="color:#D4D4D4">.</span><span style="color:#4FC1FF">client</span><span style="color:#D4D4D4">.</span><span style="color:#DCDCAA">deleteRecordAsync</span><span style="color:#179FFF">(</span></div>
<div class="ln" style="top:553.50px">35</div>
<div class="cl" style="top:567.75px">      <span style="color:#4EC9B0">AccountsService</span><span style="color:#D4D4D4">.</span><span style="color:#4FC1FF">dataSourceName</span><span style="color:#D4D4D4">,</span></div>
<div class="ln" style="top:567.75px">36</div>
<div class="cl" style="top:582.00px">      <span style="color:#9CDCFE">id</span><span style="color:#D4D4D4">.</span><span style="color:#DCDCAA">toString</span><span style="color:#FFD700">(</span><span style="color:#FFD700">)</span><span style="color:#179FFF">)</span><span style="color:#D4D4D4">;</span></div>
<div class="ln" style="top:582.00px">37</div>
<div class="cl" style="top:596.25px">  <span style="color:#DA70D6">}</span></div>
<div class="ln" style="top:596.25px">38</div>
<div class="cl" style="top:610.50px"></div>
<div class="ln" style="top:610.50px">39</div>
<div class="cl" style="top:624.75px">  <span style="color:#569CD6">public</span> <span style="color:#569CD6">static</span> <span style="color:#569CD6">async</span> <span style="color:#DCDCAA">get</span><span style="color:#DA70D6">(</span><span style="color:#9CDCFE">id</span><span style="color:#D4D4D4">:</span> <span style="color:#4EC9B0">string</span><span style="color:#D4D4D4">,</span> <span style="color:#9CDCFE">options</span><span style="color:#D4D4D4">?</span><span style="color:#D4D4D4">:</span> <span style="color:#4EC9B0">IGetOptions</span><span style="color:#DA70D6">)</span><span style="color:#D4D4D4">:</span> <span style="color:#4EC9B0">Promise</span><span style="color:#DA70D6">&lt;</span><span style="color:#4EC9B0">IOperationResult</span><span style="color:#179FFF">&lt;</span><span style="color:#4EC9B0">Accounts</span><span style="color:#179FFF">&gt;</span><span style="color:#DA70D6">&gt;</span> <span style="color:#DA70D6">{</span></div>
<div class="ln" style="top:624.75px">40</div>
<div class="cl" style="top:639.00px">    <span style="color:#569CD6">const</span> <span style="color:#4FC1FF">result</span> <span style="color:#D4D4D4">=</span> <span style="color:#C586C0">await</span> <span style="color:#4EC9B0">AccountsService</span><span style="color:#D4D4D4">.</span><span style="color:#4FC1FF">client</span><span style="color:#D4D4D4">.</span><span style="color:#DCDCAA">retrieveRecordAsync</span><span style="color:#179FFF">&lt;</span><span style="color:#4EC9B0">Accounts</span><span style="color:#179FFF">&gt;</span><span style="color:#179FFF">(</span></div>
<div class="ln" style="top:639.00px">41</div>
<div class="cl" style="top:653.25px">      <span style="color:#4EC9B0">AccountsService</span><span style="color:#D4D4D4">.</span><span style="color:#4FC1FF">dataSourceName</span><span style="color:#D4D4D4">,</span></div>
<div class="ln" style="top:653.25px">42</div>
<div class="cl" style="top:667.50px">      <span style="color:#9CDCFE">id</span><span style="color:#D4D4D4">.</span><span style="color:#DCDCAA">toString</span><span style="color:#FFD700">(</span><span style="color:#FFD700">)</span><span style="color:#D4D4D4">,</span></div>
<div class="ln" style="top:667.50px">43</div>
<div class="cl" style="top:681.75px">      <span style="color:#9CDCFE">options</span></div>
<div class="ln" style="top:681.75px">44</div>
<div class="cl" style="top:696.00px">    <span style="color:#179FFF">)</span><span style="color:#D4D4D4">;</span></div>
<div class="ln" style="top:696.00px">45</div>
<div class="a" style="left:261px;top:703px;width:1659px;height:0;"></div>
<!-- minimap -->
<div class="a" style="left:1849px;top:69px;width:60.5px;height:44.75px;background:#2a2a2a"></div>
<div id="mm">
<i style="left:1853.5px;top:69.0px;width:1.5px;background:#6A9955"></i>
<i style="left:1853.5px;top:70.0px;width:30.0px;background:#6A9955"></i>
<i style="left:1853.5px;top:71.0px;width:31.0px;background:#6A9955"></i>
<i style="left:1853.5px;top:72.0px;width:1.5px;background:#6A9955"></i>
<i style="left:1853.5px;top:74.0px;width:3.0px;background:#C586C0"></i>
<i style="left:1857.0px;top:74.0px;width:0.5px;background:#FFD700"></i>
<i style="left:1858.0px;top:74.0px;width:7.5px;background:#9CDCFE"></i>
<i style="left:1866.0px;top:74.0px;width:0.5px;background:#FFD700"></i>
<i style="left:1867.0px;top:74.0px;width:2.0px;background:#C586C0"></i>
<i style="left:1869.5px;top:74.0px;width:22.0px;background:#CE9178"></i>
<i style="left:1891.5px;top:74.0px;width:0.5px;background:#D4D4D4"></i>
<i style="left:1853.5px;top:75.0px;width:3.0px;background:#C586C0"></i>
<i style="left:1857.0px;top:75.0px;width:2.0px;background:#C586C0"></i>
<i style="left:1859.5px;top:75.0px;width:0.5px;background:#FFD700"></i>
<i style="left:1860.5px;top:75.0px;width:8.0px;background:#9CDCFE"></i>
<i style="left:1869.0px;top:75.0px;width:0.5px;background:#FFD700"></i>
<i style="left:1870.0px;top:75.0px;width:2.0px;background:#C586C0"></i>
<i style="left:1872.5px;top:75.0px;width:14.0px;background:#CE9178"></i>
<i style="left:1886.5px;top:75.0px;width:0.5px;background:#D4D4D4"></i>
<i style="left:1853.5px;top:76.0px;width:3.0px;background:#C586C0"></i>
<i style="left:1857.0px;top:76.0px;width:0.5px;background:#FFD700"></i>
<i style="left:1858.0px;top:76.0px;width:4.5px;background:#9CDCFE"></i>
<i style="left:1863.0px;top:76.0px;width:0.5px;background:#FFD700"></i>
<i style="left:1864.0px;top:76.0px;width:2.0px;background:#C586C0"></i>
<i style="left:1866.5px;top:76.0px;width:14.0px;background:#CE9178"></i>
<i style="left:1880.5px;top:76.0px;width:0.5px;background:#D4D4D4"></i>
<i style="left:1853.5px;top:77.0px;width:3.0px;background:#C586C0"></i>
<i style="left:1857.0px;top:77.0px;width:2.0px;background:#C586C0"></i>
<i style="left:1859.5px;top:77.0px;width:0.5px;background:#FFD700"></i>
<i style="left:1860.5px;top:77.0px;width:5.5px;background:#9CDCFE"></i>
<i style="left:1866.0px;top:77.0px;width:0.5px;background:#D4D4D4"></i>
<i style="left:1867.0px;top:77.0px;width:7.0px;background:#9CDCFE"></i>
<i style="left:1874.5px;top:77.0px;width:0.5px;background:#FFD700"></i>
<i style="left:1875.5px;top:77.0px;width:2.0px;background:#C586C0"></i>
<i style="left:1878.0px;top:77.0px;width:12.0px;background:#CE9178"></i>
<i style="left:1890.0px;top:77.0px;width:0.5px;background:#D4D4D4"></i>
<i style="left:1853.5px;top:78.0px;width:3.0px;background:#C586C0"></i>
<i style="left:1857.0px;top:78.0px;width:2.0px;background:#C586C0"></i>
<i style="left:1859.5px;top:78.0px;width:0.5px;background:#FFD700"></i>
<i style="left:1860.5px;top:78.0px;width:4.0px;background:#9CDCFE"></i>
<i style="left:1865.0px;top:78.0px;width:0.5px;background:#FFD700"></i>
<i style="left:1866.0px;top:78.0px;width:2.0px;background:#C586C0"></i>
<i style="left:1868.5px;top:78.0px;width:12.5px;background:#CE9178"></i>
<i style="left:1881.0px;top:78.0px;width:0.5px;background:#D4D4D4"></i>
<i style="left:1853.5px;top:80.0px;width:3.0px;background:#C586C0"></i>
<i style="left:1857.0px;top:80.0px;width:2.5px;background:#569CD6"></i>
<i style="left:1860.0px;top:80.0px;width:7.5px;background:#4EC9B0"></i>
<i style="left:1868.0px;top:80.0px;width:0.5px;background:#FFD700"></i>
<i style="left:1854.5px;top:81.0px;width:3.5px;background:#569CD6"></i>
<i style="left:1858.5px;top:81.0px;width:3.0px;background:#569CD6"></i>
<i style="left:1862.0px;top:81.0px;width:4.0px;background:#569CD6"></i>
<i style="left:1866.5px;top:81.0px;width:7.0px;background:#4FC1FF"></i>
<i style="left:1874.0px;top:81.0px;width:0.5px;background:#D4D4D4"></i>
<i style="left:1875.0px;top:81.0px;width:5.0px;background:#CE9178"></i>
<i style="left:1880.0px;top:81.0px;width:0.5px;background:#D4D4D4"></i>
<i style="left:1854.5px;top:83.0px;width:3.5px;background:#569CD6"></i>
<i style="left:1858.5px;top:83.0px;width:3.0px;background:#569CD6"></i>
<i style="left:1862.0px;top:83.0px;width:4.0px;background:#569CD6"></i>
<i style="left:1866.5px;top:83.0px;width:3.0px;background:#4FC1FF"></i>
<i style="left:1870.0px;top:83.0px;width:0.5px;background:#D4D4D4"></i>
<i style="left:1871.0px;top:83.0px;width:4.5px;background:#DCDCAA"></i>
<i style="left:1875.5px;top:83.0px;width:0.5px;background:#DA70D6"></i>
<i style="left:1876.0px;top:83.0px;width:7.5px;background:#4FC1FF"></i>
<i style="left:1883.5px;top:83.0px;width:0.5px;background:#DA70D6"></i>
<i style="left:1884.0px;top:83.0px;width:0.5px;background:#D4D4D4"></i>
<i style="left:1854.5px;top:85.0px;width:3.0px;background:#569CD6"></i>
<i style="left:1858.0px;top:85.0px;width:3.0px;background:#569CD6"></i>
<i style="left:1861.5px;top:85.0px;width:2.5px;background:#569CD6"></i>
<i style="left:1864.5px;top:85.0px;width:3.0px;background:#DCDCAA"></i>
<i style="left:1867.5px;top:85.0px;width:0.5px;background:#DA70D6"></i>
<i style="left:1868.0px;top:85.0px;width:3.0px;background:#9CDCFE"></i>
<i style="left:1871.0px;top:85.0px;width:0.5px;background:#D4D4D4"></i>
<i style="left:1872.0px;top:85.0px;width:2.0px;background:#4EC9B0"></i>
<i style="left:1874.0px;top:85.0px;width:0.5px;background:#179FFF"></i>
<i style="left:1874.5px;top:85.0px;width:4.0px;background:#4EC9B0"></i>
<i style="left:1878.5px;top:85.0px;width:0.5px;background:#D4D4D4"></i>
<i style="left:1879.5px;top:85.0px;width:5.5px;background:#CE9178"></i>
<i style="left:1885.0px;top:85.0px;width:0.5px;background:#179FFF"></i>
<i style="left:1885.5px;top:85.0px;width:0.5px;background:#DA70D6"></i>
<i style="left:1886.0px;top:85.0px;width:0.5px;background:#D4D4D4"></i>
<i style="left:1887.0px;top:85.0px;width:3.5px;background:#4EC9B0"></i>
<i style="left:1890.5px;top:85.0px;width:0.5px;background:#DA70D6"></i>
<i style="left:1891.0px;top:85.0px;width:8.0px;background:#4EC9B0"></i>
<i style="left:1899.0px;top:85.0px;width:0.5px;background:#179FFF"></i>
<i style="left:1899.5px;top:85.0px;width:4.0px;background:#4EC9B0"></i>
<i style="left:1903.5px;top:85.0px;width:0.5px;background:#179FFF"></i>
<i style="left:1904.0px;top:85.0px;width:0.5px;background:#DA70D6"></i>
<i style="left:1905.0px;top:85.0px;width:0.5px;background:#DA70D6"></i>
<i style="left:1855.5px;top:86.0px;width:2.5px;background:#569CD6"></i>
<i style="left:1858.5px;top:86.0px;width:3.0px;background:#4FC1FF"></i>
<i style="left:1862.0px;top:86.0px;width:0.5px;background:#D4D4D4"></i>
<i style="left:1863.0px;top:86.0px;width:2.5px;background:#C586C0"></i>
<i style="left:1866.0px;top:86.0px;width:7.5px;background:#4EC9B0"></i>
<i style="left:1873.5px;top:86.0px;width:0.5px;background:#D4D4D4"></i>
<i style="left:1874.0px;top:86.0px;width:3.0px;background:#4FC1FF"></i>
<i style="left:1877.0px;top:86.0px;width:0.5px;background:#D4D4D4"></i>
<i style="left:1877.5px;top:86.0px;width:8.5px;background:#DCDCAA"></i>
<i style="left:1886.0px;top:86.0px;width:0.5px;background:#179FFF"></i>
<i style="left:1886.5px;top:86.0px;width:2.0px;background:#4EC9B0"></i>
<i style="left:1888.5px;top:86.0px;width:0.5px;background:#FFD700"></i>
<i style="left:1889.0px;top:86.0px;width:4.0px;background:#4EC9B0"></i>
<i style="left:1893.0px;top:86.0px;width:0.5px;background:#D4D4D4"></i>
<i style="left:1894.0px;top:86.0px;width:5.5px;background:#CE9178"></i>
<i style="left:1899.5px;top:86.0px;width:0.5px;background:#FFD700"></i>
<i style="left:1900.0px;top:86.0px;width:0.5px;background:#D4D4D4"></i>
<i style="left:1901.0px;top:86.0px;width:4.0px;background:#4EC9B0"></i>
<i style="left:1905.0px;top:86.0px;width:0.5px;background:#179FFF"></i>
<i style="left:1905.5px;top:86.0px;width:0.5px;background:#179FFF"></i>
<i style="left:1856.5px;top:87.0px;width:7.5px;background:#4EC9B0"></i>
<i style="left:1864.0px;top:87.0px;width:0.5px;background:#D4D4D4"></i>
<i style="left:1864.5px;top:87.0px;width:7.0px;background:#4FC1FF"></i>
<i style="left:1871.5px;top:87.0px;width:0.5px;background:#D4D4D4"></i>
<i style="left:1856.5px;top:88.0px;width:3.0px;background:#9CDCFE"></i>
<i style="left:1855.5px;top:89.0px;width:0.5px;background:#179FFF"></i>
<i style="left:1856.0px;top:89.0px;width:0.5px;background:#D4D4D4"></i>
<i style="left:1855.5px;top:90.0px;width:3.0px;background:#C586C0"></i>
<i style="left:1859.0px;top:90.0px;width:3.0px;background:#4FC1FF"></i>
<i style="left:1862.0px;top:90.0px;width:0.5px;background:#D4D4D4"></i>
<i style="left:1854.5px;top:91.0px;width:0.5px;background:#DA70D6"></i>
<i style="left:1854.5px;top:93.0px;width:3.0px;background:#569CD6"></i>
<i style="left:1858.0px;top:93.0px;width:3.0px;background:#569CD6"></i>
<i style="left:1861.5px;top:93.0px;width:2.5px;background:#569CD6"></i>
<i style="left:1864.5px;top:93.0px;width:3.0px;background:#DCDCAA"></i>
<i style="left:1867.5px;top:93.0px;width:0.5px;background:#DA70D6"></i>
<i style="left:1868.0px;top:93.0px;width:1.0px;background:#9CDCFE"></i>
<i style="left:1869.0px;top:93.0px;width:0.5px;background:#D4D4D4"></i>
<i style="left:1870.0px;top:93.0px;width:3.0px;background:#4EC9B0"></i>
<i style="left:1873.0px;top:93.0px;width:0.5px;background:#D4D4D4"></i>
<i style="left:1874.0px;top:93.0px;width:6.5px;background:#9CDCFE"></i>
<i style="left:1880.5px;top:93.0px;width:0.5px;background:#D4D4D4"></i>
<i style="left:1881.5px;top:93.0px;width:3.5px;background:#4EC9B0"></i>
<i style="left:1885.0px;top:93.0px;width:0.5px;background:#179FFF"></i>
<i style="left:1885.5px;top:93.0px;width:2.0px;background:#4EC9B0"></i>
<i style="left:1887.5px;top:93.0px;width:0.5px;background:#FFD700"></i>
<i style="left:1888.0px;top:93.0px;width:4.0px;background:#4EC9B0"></i>
<i style="left:1892.0px;top:93.0px;width:0.5px;background:#D4D4D4"></i>
<i style="left:1893.0px;top:93.0px;width:5.5px;background:#CE9178"></i>
<i style="left:1898.5px;top:93.0px;width:0.5px;background:#FFD700"></i>
<i style="left:1899.0px;top:93.0px;width:0.5px;background:#179FFF"></i>
<i style="left:1899.5px;top:93.0px;width:0.5px;background:#DA70D6"></i>
<i style="left:1900.0px;top:93.0px;width:0.5px;background:#D4D4D4"></i>
<i style="left:1901.0px;top:93.0px;width:3.5px;background:#4EC9B0"></i>
<i style="left:1904.5px;top:93.0px;width:0.5px;background:#DA70D6"></i>
<i style="left:1905.0px;top:93.0px;width:4.0px;background:#4EC9B0"></i>
<i style="left:1855.5px;top:94.0px;width:2.5px;background:#569CD6"></i>
<i style="left:1858.5px;top:94.0px;width:3.0px;background:#4FC1FF"></i>
<i style="left:1862.0px;top:94.0px;width:0.5px;background:#D4D4D4"></i>
<i style="left:1863.0px;top:94.0px;width:2.5px;background:#C586C0"></i>
<i style="left:1866.0px;top:94.0px;width:7.5px;background:#4EC9B0"></i>
<i style="left:1873.5px;top:94.0px;width:0.5px;background:#D4D4D4"></i>
<i style="left:1874.0px;top:94.0px;width:3.0px;background:#4FC1FF"></i>
<i style="left:1877.0px;top:94.0px;width:0.5px;background:#D4D4D4"></i>
<i style="left:1877.5px;top:94.0px;width:8.5px;background:#DCDCAA"></i>
<i style="left:1886.0px;top:94.0px;width:0.5px;background:#179FFF"></i>
<i style="left:1886.5px;top:94.0px;width:3.5px;background:#4EC9B0"></i>
<i style="left:1890.0px;top:94.0px;width:0.5px;background:#FFD700"></i>
<i style="left:1890.5px;top:94.0px;width:2.0px;background:#4EC9B0"></i>
<i style="left:1892.5px;top:94.0px;width:0.5px;background:#DA70D6"></i>
<i style="left:1893.0px;top:94.0px;width:4.0px;background:#4EC9B0"></i>
<i style="left:1897.0px;top:94.0px;width:0.5px;background:#D4D4D4"></i>
<i style="left:1898.0px;top:94.0px;width:5.5px;background:#CE9178"></i>
<i style="left:1903.5px;top:94.0px;width:0.5px;background:#DA70D6"></i>
<i style="left:1904.0px;top:94.0px;width:0.5px;background:#FFD700"></i>
<i style="left:1904.5px;top:94.0px;width:0.5px;background:#D4D4D4"></i>
<i style="left:1905.5px;top:94.0px;width:3.5px;background:#4EC9B0"></i>
<i style="left:1856.5px;top:95.0px;width:7.5px;background:#4EC9B0"></i>
<i style="left:1864.0px;top:95.0px;width:0.5px;background:#D4D4D4"></i>
<i style="left:1864.5px;top:95.0px;width:7.0px;background:#4FC1FF"></i>
<i style="left:1871.5px;top:95.0px;width:0.5px;background:#D4D4D4"></i>
<i style="left:1856.5px;top:96.0px;width:1.0px;background:#9CDCFE"></i>
<i style="left:1857.5px;top:96.0px;width:0.5px;background:#D4D4D4"></i>
<i style="left:1858.0px;top:96.0px;width:4.0px;background:#DCDCAA"></i>
<i style="left:1862.0px;top:96.0px;width:0.5px;background:#FFD700"></i>
<i style="left:1862.5px;top:96.0px;width:0.5px;background:#FFD700"></i>
<i style="left:1863.0px;top:96.0px;width:0.5px;background:#D4D4D4"></i>
<i style="left:1856.5px;top:97.0px;width:6.5px;background:#9CDCFE"></i>
<i style="left:1855.5px;top:98.0px;width:0.5px;background:#179FFF"></i>
<i style="left:1856.0px;top:98.0px;width:0.5px;background:#D4D4D4"></i>
<i style="left:1855.5px;top:99.0px;width:3.0px;background:#C586C0"></i>
<i style="left:1859.0px;top:99.0px;width:3.0px;background:#4FC1FF"></i>
<i style="left:1862.0px;top:99.0px;width:0.5px;background:#D4D4D4"></i>
<i style="left:1854.5px;top:100.0px;width:0.5px;background:#DA70D6"></i>
<i style="left:1854.5px;top:102.0px;width:3.0px;background:#569CD6"></i>
<i style="left:1858.0px;top:102.0px;width:3.0px;background:#569CD6"></i>
<i style="left:1861.5px;top:102.0px;width:2.5px;background:#569CD6"></i>
<i style="left:1864.5px;top:102.0px;width:3.0px;background:#DCDCAA"></i>
<i style="left:1867.5px;top:102.0px;width:0.5px;background:#DA70D6"></i>
<i style="left:1868.0px;top:102.0px;width:1.0px;background:#9CDCFE"></i>
<i style="left:1869.0px;top:102.0px;width:0.5px;background:#D4D4D4"></i>
<i style="left:1870.0px;top:102.0px;width:3.0px;background:#4EC9B0"></i>
<i style="left:1873.0px;top:102.0px;width:0.5px;background:#DA70D6"></i>
<i style="left:1873.5px;top:102.0px;width:0.5px;background:#D4D4D4"></i>
<i style="left:1874.5px;top:102.0px;width:3.5px;background:#4EC9B0"></i>
<i style="left:1878.0px;top:102.0px;width:0.5px;background:#DA70D6"></i>
<i style="left:1878.5px;top:102.0px;width:2.0px;background:#4EC9B0"></i>
<i style="left:1880.5px;top:102.0px;width:0.5px;background:#DA70D6"></i>
<i style="left:1881.5px;top:102.0px;width:0.5px;background:#DA70D6"></i>
<i style="left:1855.5px;top:103.0px;width:2.5px;background:#C586C0"></i>
<i style="left:1858.5px;top:103.0px;width:7.5px;background:#4EC9B0"></i>
<i style="left:1866.0px;top:103.0px;width:0.5px;background:#D4D4D4"></i>
<i style="left:1866.5px;top:103.0px;width:3.0px;background:#4FC1FF"></i>
<i style="left:1869.5px;top:103.0px;width:0.5px;background:#D4D4D4"></i>
<i style="left:1870.0px;top:103.0px;width:8.5px;background:#DCDCAA"></i>
<i style="left:1878.5px;top:103.0px;width:0.5px;background:#179FFF"></i>
<i style="left:1856.5px;top:104.0px;width:7.5px;background:#4EC9B0"></i>
<i style="left:1864.0px;top:104.0px;width:0.5px;background:#D4D4D4"></i>
<i style="left:1864.5px;top:104.0px;width:7.0px;background:#4FC1FF"></i>
<i style="left:1871.5px;top:104.0px;width:0.5px;background:#D4D4D4"></i>
<i style="left:1856.5px;top:105.0px;width:1.0px;background:#9CDCFE"></i>
<i style="left:1857.5px;top:105.0px;width:0.5px;background:#D4D4D4"></i>
<i style="left:1858.0px;top:105.0px;width:4.0px;background:#DCDCAA"></i>
<i style="left:1862.0px;top:105.0px;width:0.5px;background:#FFD700"></i>
<i style="left:1862.5px;top:105.0px;width:0.5px;background:#FFD700"></i>
<i style="left:1863.0px;top:105.0px;width:0.5px;background:#179FFF"></i>
<i style="left:1863.5px;top:105.0px;width:0.5px;background:#D4D4D4"></i>
<i style="left:1854.5px;top:106.0px;width:0.5px;background:#DA70D6"></i>
<i style="left:1854.5px;top:108.0px;width:3.0px;background:#569CD6"></i>
<i style="left:1858.0px;top:108.0px;width:3.0px;background:#569CD6"></i>
<i style="left:1861.5px;top:108.0px;width:2.5px;background:#569CD6"></i>
<i style="left:1864.5px;top:108.0px;width:1.5px;background:#DCDCAA"></i>
<i style="left:1866.0px;top:108.0px;width:0.5px;background:#DA70D6"></i>
<i style="left:1866.5px;top:108.0px;width:1.0px;background:#9CDCFE"></i>
<i style="left:1867.5px;top:108.0px;width:0.5px;background:#D4D4D4"></i>
<i style="left:1868.5px;top:108.0px;width:3.0px;background:#4EC9B0"></i>
<i style="left:1871.5px;top:108.0px;width:0.5px;background:#D4D4D4"></i>
<i style="left:1872.5px;top:108.0px;width:3.5px;background:#9CDCFE"></i>
<i style="left:1876.0px;top:108.0px;width:0.5px;background:#D4D4D4"></i>
<i style="left:1876.5px;top:108.0px;width:0.5px;background:#D4D4D4"></i>
<i style="left:1877.5px;top:108.0px;width:5.5px;background:#4EC9B0"></i>
<i style="left:1883.0px;top:108.0px;width:0.5px;background:#DA70D6"></i>
<i style="left:1883.5px;top:108.0px;width:0.5px;background:#D4D4D4"></i>
<i style="left:1884.5px;top:108.0px;width:3.5px;background:#4EC9B0"></i>
<i style="left:1888.0px;top:108.0px;width:0.5px;background:#DA70D6"></i>
<i style="left:1888.5px;top:108.0px;width:8.0px;background:#4EC9B0"></i>
<i style="left:1896.5px;top:108.0px;width:0.5px;background:#179FFF"></i>
<i style="left:1897.0px;top:108.0px;width:4.0px;background:#4EC9B0"></i>
<i style="left:1901.0px;top:108.0px;width:0.5px;background:#179FFF"></i>
<i style="left:1901.5px;top:108.0px;width:0.5px;background:#DA70D6"></i>
<i style="left:1902.5px;top:108.0px;width:0.5px;background:#DA70D6"></i>
<i style="left:1855.5px;top:109.0px;width:2.5px;background:#569CD6"></i>
<i style="left:1858.5px;top:109.0px;width:3.0px;background:#4FC1FF"></i>
<i style="left:1862.0px;top:109.0px;width:0.5px;background:#D4D4D4"></i>
<i style="left:1863.0px;top:109.0px;width:2.5px;background:#C586C0"></i>
<i style="left:1866.0px;top:109.0px;width:7.5px;background:#4EC9B0"></i>
<i style="left:1873.5px;top:109.0px;width:0.5px;background:#D4D4D4"></i>
<i style="left:1874.0px;top:109.0px;width:3.0px;background:#4FC1FF"></i>
<i style="left:1877.0px;top:109.0px;width:0.5px;background:#D4D4D4"></i>
<i style="left:1877.5px;top:109.0px;width:9.5px;background:#DCDCAA"></i>
<i style="left:1887.0px;top:109.0px;width:0.5px;background:#179FFF"></i>
<i style="left:1887.5px;top:109.0px;width:4.0px;background:#4EC9B0"></i>
<i style="left:1891.5px;top:109.0px;width:0.5px;background:#179FFF"></i>
<i style="left:1892.0px;top:109.0px;width:0.5px;background:#179FFF"></i>
<i style="left:1856.5px;top:110.0px;width:7.5px;background:#4EC9B0"></i>
<i style="left:1864.0px;top:110.0px;width:0.5px;background:#D4D4D4"></i>
<i style="left:1864.5px;top:110.0px;width:7.0px;background:#4FC1FF"></i>
<i style="left:1871.5px;top:110.0px;width:0.5px;background:#D4D4D4"></i>
<i style="left:1856.5px;top:111.0px;width:1.0px;background:#9CDCFE"></i>
<i style="left:1857.5px;top:111.0px;width:0.5px;background:#D4D4D4"></i>
<i style="left:1858.0px;top:111.0px;width:4.0px;background:#DCDCAA"></i>
<i style="left:1862.0px;top:111.0px;width:0.5px;background:#FFD700"></i>
<i style="left:1862.5px;top:111.0px;width:0.5px;background:#FFD700"></i>
<i style="left:1863.0px;top:111.0px;width:0.5px;background:#D4D4D4"></i>
<i style="left:1856.5px;top:112.0px;width:3.5px;background:#9CDCFE"></i>
<i style="left:1855.5px;top:113.0px;width:0.5px;background:#179FFF"></i>
<i style="left:1856.0px;top:113.0px;width:0.5px;background:#D4D4D4"></i>
<i style="left:1855.5px;top:114.0px;width:3.0px;background:#C586C0"></i>
<i style="left:1859.0px;top:114.0px;width:3.0px;background:#4FC1FF"></i>
<i style="left:1862.0px;top:114.0px;width:0.5px;background:#D4D4D4"></i>
<i style="left:1854.5px;top:115.0px;width:0.5px;background:#DA70D6"></i>
<i style="left:1854.5px;top:117.0px;width:3.0px;background:#569CD6"></i>
<i style="left:1858.0px;top:117.0px;width:3.0px;background:#569CD6"></i>
<i style="left:1861.5px;top:117.0px;width:2.5px;background:#569CD6"></i>
<i style="left:1864.5px;top:117.0px;width:3.0px;background:#DCDCAA"></i>
<i style="left:1867.5px;top:117.0px;width:0.5px;background:#DA70D6"></i>
<i style="left:1868.0px;top:117.0px;width:3.5px;background:#9CDCFE"></i>
<i style="left:1871.5px;top:117.0px;width:0.5px;background:#D4D4D4"></i>
<i style="left:1872.0px;top:117.0px;width:0.5px;background:#D4D4D4"></i>
<i style="left:1873.0px;top:117.0px;width:7.0px;background:#4EC9B0"></i>
<i style="left:1880.0px;top:117.0px;width:0.5px;background:#DA70D6"></i>
<i style="left:1880.5px;top:117.0px;width:0.5px;background:#D4D4D4"></i>
<i style="left:1881.5px;top:117.0px;width:3.5px;background:#4EC9B0"></i>
<i style="left:1885.0px;top:117.0px;width:0.5px;background:#DA70D6"></i>
<i style="left:1885.5px;top:117.0px;width:8.0px;background:#4EC9B0"></i>
<i style="left:1893.5px;top:117.0px;width:0.5px;background:#179FFF"></i>
<i style="left:1894.0px;top:117.0px;width:4.0px;background:#4EC9B0"></i>
<i style="left:1898.0px;top:117.0px;width:0.5px;background:#FFD700"></i>
<i style="left:1898.5px;top:117.0px;width:0.5px;background:#FFD700"></i>
<i style="left:1899.0px;top:117.0px;width:0.5px;background:#179FFF"></i>
<i style="left:1899.5px;top:117.0px;width:0.5px;background:#DA70D6"></i>
<i style="left:1900.5px;top:117.0px;width:0.5px;background:#DA70D6"></i>
<i style="left:1855.5px;top:118.0px;width:2.5px;background:#569CD6"></i>
<i style="left:1858.5px;top:118.0px;width:3.0px;background:#4FC1FF"></i>
<i style="left:1862.0px;top:118.0px;width:0.5px;background:#D4D4D4"></i>
<i style="left:1863.0px;top:118.0px;width:2.5px;background:#C586C0"></i>
<i style="left:1866.0px;top:118.0px;width:7.5px;background:#4EC9B0"></i>
<i style="left:1873.5px;top:118.0px;width:0.5px;background:#D4D4D4"></i>
<i style="left:1874.0px;top:118.0px;width:3.0px;background:#4FC1FF"></i>
<i style="left:1877.0px;top:118.0px;width:0.5px;background:#D4D4D4"></i>
<i style="left:1877.5px;top:118.0px;width:14.0px;background:#DCDCAA"></i>
<i style="left:1891.5px;top:118.0px;width:0.5px;background:#179FFF"></i>
<i style="left:1892.0px;top:118.0px;width:4.0px;background:#4EC9B0"></i>
<i style="left:1896.0px;top:118.0px;width:0.5px;background:#179FFF"></i>
<i style="left:1896.5px;top:118.0px;width:0.5px;background:#179FFF"></i>
<i style="left:1856.5px;top:119.0px;width:7.5px;background:#4EC9B0"></i>
<i style="left:1864.0px;top:119.0px;width:0.5px;background:#D4D4D4"></i>
<i style="left:1864.5px;top:119.0px;width:7.0px;background:#4FC1FF"></i>
<i style="left:1871.5px;top:119.0px;width:0.5px;background:#D4D4D4"></i>
<i style="left:1856.5px;top:120.0px;width:3.5px;background:#9CDCFE"></i>
<i style="left:1855.5px;top:121.0px;width:0.5px;background:#179FFF"></i>
<i style="left:1856.0px;top:121.0px;width:0.5px;background:#D4D4D4"></i>
<i style="left:1855.5px;top:122.0px;width:3.0px;background:#C586C0"></i>
<i style="left:1859.0px;top:122.0px;width:3.0px;background:#4FC1FF"></i>
<i style="left:1862.0px;top:122.0px;width:0.5px;background:#D4D4D4"></i>
<i style="left:1854.5px;top:123.0px;width:0.5px;background:#DA70D6"></i>
<i style="left:1853.5px;top:124.0px;width:0.5px;background:#FFD700"></i>
</div>
<div class="a" style="left:1909px;top:69px;width:1px;height:634px;background:#1a1a1a"></div>
<div class="a" style="left:1909.8px;top:69px;width:10.2px;height:280px;background:#4a4a4a"></div>
<div class="a" style="left:1909.8px;top:69px;width:10.2px;height:1px;background:#5a5a5a"></div>

<!-- PANEL -->
<div id="panel"></div>
<div class="hline" style="left:261px;top:703px;width:1659px"></div>
<div class="ptab" style="left:276px;transform:scaleX(0.865)">PROBLEMS</div>
<div class="ptab" style="left:334px;transform:scaleX(0.909)">OUTPUT</div>
<div class="ptab" style="left:383.3px;transform:scaleX(0.885)">DEBUG CONSOLE</div>
<div class="ptab" style="left:465.4px;color:#e7e7e7;transform:scaleX(0.92)">TERMINAL</div>
<div class="a" style="left:463.8px;top:724px;width:41.4px;height:1px;background:#0078d4"></div>
<div class="ptab" style="left:521.6px;transform:scaleX(0.858)">PORTS</div>
<!-- panel actions -->
<svg class="ic" style="left:1738.5px;top:710.5px" width="12" height="12" viewBox="0 0 12 12"><rect x="0.6" y="0.6" width="10.6" height="10.6" rx="1.2" fill="none" stroke="#cccccc" stroke-width="0.9"/><path d="M2.5 3.2 L5 5.5 L2.5 7.8 M5.2 8.6 H8.5" fill="none" stroke="#cccccc" stroke-width="0.9"/></svg>
<div class="a" style="left:1753.5px;top:709.5px;font-size:8.1px;line-height:13px;color:#cccccc">pwsh</div>
<svg class="ic" style="left:1780px;top:711px" width="11" height="11" viewBox="0 0 11 11"><path d="M5.5 0.5 V10.5 M0.5 5.5 H10.5" stroke="#cccccc" stroke-width="0.95"/></svg>
<svg class="ic" style="left:1795px;top:714px" width="6" height="4" viewBox="0 0 6 4"><path d="M0.5 0.5 L3 3 L5.5 0.5" fill="none" stroke="#cccccc" stroke-width="0.8"/></svg>
<svg class="ic" style="left:1809.8px;top:711px" width="11" height="11" viewBox="0 0 11 11"><rect x="0.6" y="0.6" width="9.8" height="9.8" rx="1" fill="none" stroke="#cccccc" stroke-width="0.9"/><path d="M5.5 0.6 V10.4" stroke="#cccccc" stroke-width="0.9"/></svg>
<svg class="ic" style="left:1829.8px;top:710.5px" width="10" height="12" viewBox="0 0 10 12"><path d="M1.5 3 V10.5 Q1.5 11.3 2.3 11.3 H7.7 Q8.5 11.3 8.5 10.5 V3 M0.5 2.5 H9.5 M3.5 2.5 V1.2 Q3.5 0.6 4.1 0.6 H5.9 Q6.5 0.6 6.5 1.2 V2.5 M4 4.5 V9.5 M6 4.5 V9.5" fill="none" stroke="#cccccc" stroke-width="0.9"/></svg>
<svg class="ic" style="left:1848px;top:715px" width="11" height="3" viewBox="0 0 11 3"><circle cx="1.2" cy="1.5" r="0.95" fill="#cccccc"/><circle cx="5.2" cy="1.5" r="0.95" fill="#cccccc"/><circle cx="9.2" cy="1.5" r="0.95" fill="#cccccc"/></svg>
<div class="a" style="left:1868.5px;top:710px;width:1px;height:12px;background:#4a4a4a"></div>
<svg class="ic" style="left:1878px;top:711px" width="11" height="11" viewBox="0 0 11 11"><path d="M0.6 3.5 V0.6 H3.5 M7.5 0.6 H10.4 V3.5 M10.4 7.5 V10.4 H7.5 M3.5 10.4 H0.6 V7.5" fill="none" stroke="#cccccc" stroke-width="0.9"/></svg>
<svg class="ic" style="left:1899px;top:712px" width="8" height="8" viewBox="0 0 8 8"><path d="M0.5 0.5 L7.5 7.5 M7.5 0.5 L0.5 7.5" stroke="#cccccc" stroke-width="0.95"/></svg>
<!-- terminal -->
<div class="a" style="left:261.5px;top:738px;width:3px;height:12.6px;background:#0078d4"></div>
<div class="term" style="left:276px;top:739.5px">PS C:\Users\jordanchodak\PowerAppsCodeApps\samples\HelloWorld&gt; <span style="color:#e5e510">pac</span> code push</div>
<div class="a" style="left:694px;top:738px;width:5.6px;height:12.8px;background:#cccccc"></div>
<div class="a" style="left:266px;top:806.4px;width:6px;height:6px;border-radius:50%;background:#1e8ee0"></div>
<div class="vline" style="left:1909.5px;top:738.5px;height:324.5px;background:#262626"></div>
<div class="a" style="left:1910px;top:798px;width:3px;height:9.7px;background:#2a8fe0"></div>
<!-- mouse cursor -->
<svg class="ic" style="left:918px;top:746px" width="11" height="15" viewBox="0 0 11 15"><path d="M1 0.8 V12.5 L3.8 10 L5.8 14 L7.4 13.2 L5.5 9.4 L9.5 9.2 Z" fill="#f0f0f0" stroke="#000" stroke-width="0.8"/></svg>

<!-- STATUS BAR -->
<div id="status"></div>
<div class="hline" style="left:0;top:1063px;width:1920px"></div>
<div class="a" style="left:0;top:1063.5px;width:25.8px;height:15.5px;background:#0078d4"></div>
<svg class="ic" style="left:9px;top:1066.5px" width="8" height="10" viewBox="0 0 8 10"><path d="M0.2 2.6 L3.8 5.5 L0.5 8.8 M6.8 0.1 L3.8 3 L6.8 6.3" fill="none" stroke="#ffffff" stroke-width="0.95"/></svg>
<div class="a" style="left:0;top:1079px;width:1920px;height:1px;background:#0e0e0e"></div>
<svg class="ic" style="left:32px;top:1065.5px" width="10" height="11" viewBox="0 0 10 11"><circle cx="2.2" cy="1.9" r="1.4" fill="none" stroke="#cccccc" stroke-width="0.85"/><circle cx="2.2" cy="9.1" r="1.4" fill="none" stroke="#cccccc" stroke-width="0.85"/><circle cx="7.8" cy="3.4" r="1.4" fill="none" stroke="#cccccc" stroke-width="0.85"/><path d="M2.2 3.3 V7.7 M7.8 4.8 Q7.8 7 3.2 8.1" fill="none" stroke="#cccccc" stroke-width="0.85"/></svg>
<div class="st" style="left:45px;transform:scaleX(0.97)">main*</div>
<svg class="ic" style="left:72px;top:1066.5px" width="11" height="10" viewBox="0 0 11 10"><path d="M2.2 3.2 A3.6 3.6 0 0 1 8.6 3.2 M8.8 6.6 A3.6 3.6 0 0 1 2.4 6.8" fill="none" stroke="#cccccc" stroke-width="0.9"/><path d="M0.6 4.8 L2.4 2.9 L3.6 5 Z M10.4 5 L8.6 7 L7.4 4.9 Z" fill="#cccccc"/></svg>
<svg class="ic" style="left:95px;top:1066px" width="10" height="10" viewBox="0 0 10 10"><circle cx="5" cy="5" r="4.3" fill="none" stroke="#cccccc" stroke-width="0.85"/><path d="M3.2 3.2 L6.8 6.8 M6.8 3.2 L3.2 6.8" stroke="#cccccc" stroke-width="0.85"/></svg>
<div class="st" style="left:107.5px">0</div>
<svg class="ic" style="left:115.5px;top:1066px" width="10" height="10" viewBox="0 0 10 10"><path d="M5 0.8 L9.4 9.2 H0.6 Z" fill="none" stroke="#cccccc" stroke-width="0.85" stroke-linejoin="round"/><path d="M5 3.6 V6.4 M5 7.2 V8" stroke="#cccccc" stroke-width="0.85"/></svg>
<div class="st" style="left:127.8px">0</div>
<div class="st" style="left:1649px;transform:scaleX(0.92)">Ln 1, Col 1</div>
<div class="st" style="left:1702.5px;transform:scaleX(0.89)">Spaces: 2</div>
<div class="st" style="left:1750.8px;transform:scaleX(0.93)">UTF-8</div>
<div class="st" style="left:1786.7px;transform:scaleX(0.93)">LF</div>
<div class="st" style="left:1808px;transform:scaleX(0.93)">{ }</div>
<div class="st" style="left:1823px;transform:scaleX(0.943)">TypeScript</div>
<svg class="ic" style="left:1875px;top:1066px" width="12" height="10" viewBox="0 0 12 10"><path d="M2.2 0.6 H9.8 Q11.5 0.6 11.5 2.6 V5.8 Q11.5 9.6 6 9.6 Q0.5 9.6 0.5 5.8 V2.6 Q0.5 0.6 2.2 0.6 Z" fill="#cccccc"/><rect x="1.8" y="1.7" width="3.3" height="2.9" rx="0.8" fill="#181818"/><rect x="6.9" y="1.7" width="3.3" height="2.9" rx="0.8" fill="#181818"/><rect x="2" y="5.3" width="8" height="3.2" rx="1" fill="#181818"/><rect x="4.3" y="5.9" width="0.9" height="1.8" fill="#cccccc"/><rect x="6.8" y="5.9" width="0.9" height="1.8" fill="#cccccc"/></svg>
<svg class="ic" style="left:1898px;top:1065.5px" width="11" height="11" viewBox="0 0 11 11"><path d="M6 1.6 Q5.5 1.4 5 1.4 Q2.2 1.4 2.2 4.6 V7.8 L1.4 8.8 H8.6 L7.8 7.8 V5.6" fill="none" stroke="#cccccc" stroke-width="0.95"/><path d="M4 9.6 Q5 10.6 6 9.6" fill="none" stroke="#cccccc" stroke-width="0.95"/><circle cx="8.3" cy="2.4" r="1.9" fill="#d0d0d0"/></svg>
</body></html>
